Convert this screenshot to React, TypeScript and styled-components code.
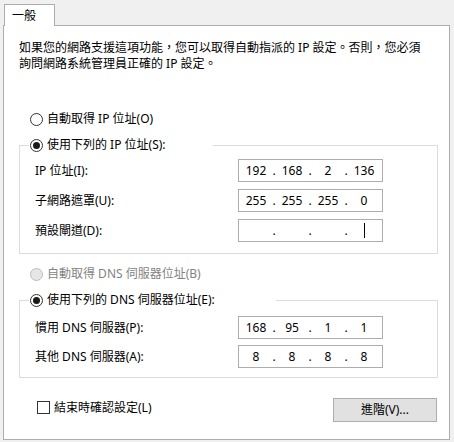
import React from 'react';
import styled, {createGlobalStyle} from 'styled-components';

type Octets = [string, string, string, string];

const GlobalStyle = createGlobalStyle`
  html, body {
    margin: 0;
    padding: 0;
    background: #f0f0f0;
  }
  body {
    font-family: "Noto Sans", "Noto Sans CJK TC", sans-serif;
    font-size: 12px;
    color: #000;
  }
`;

const Radio: React.FC<{checked?: boolean; disabled?: boolean}> = ({checked, disabled}) => (
    <RadioCircle $checked={checked} $disabled={disabled}/>
);

const IpField: React.FC<{value: Octets; caret?: boolean}> = ({value, caret}) => (
    <IpBox>
        {value.map((v, i) => (
            <React.Fragment key={i}>
                {i > 0 && <Dot>.</Dot>}
                <Octet>
                    {v}
                    {caret && i === 3 && <Caret/>}
                </Octet>
            </React.Fragment>
        ))}
    </IpBox>
);

const FieldRow: React.FC<{label: string; value: Octets; caret?: boolean}> = ({label, value, caret}) => (
    <Row>
        <Label>{label}</Label>
        <IpField value={value} caret={caret}/>
    </Row>
);

export default function App() {
    return (
        <>
            <GlobalStyle/>
            <Window>
                <TabStrip>
                    <Tab>一般</Tab>
                </TabStrip>
                <Panel>
                    <Description>
                        如果您的網路支援這項功能，您可以取得自動指派的 IP 設定。否則，您必須<br/>
                        詢問網路系統管理員正確的 IP 設定。
                    </Description>

                    <OptionRow $top={39}>
                        <Radio/>
                        <span>自動取得 IP 位址(O)</span>
                    </OptionRow>
                    <Group>
                        <GroupLegend $width={184}>
                            <Radio checked/>
                            <span>使用下列的 IP 位址(S):</span>
                        </GroupLegend>
                        <Rows $top={6} $bottom={11} $gap={7}>
                            <FieldRow label="IP 位址(I):" value={['192', '168', '2', '136']}/>
                            <FieldRow label="子網路遮罩(U):" value={['255', '255', '255', '0']}/>
                            <FieldRow label="預設閘道(D):" value={['', '', '', '']} caret/>
                        </Rows>
                    </Group>

                    <OptionRow $top={12} $disabled>
                        <Radio disabled/>
                        <span>自動取得 DNS 伺服器位址(B)</span>
                    </OptionRow>
                    <Group>
                        <GroupLegend $width={247}>
                            <Radio checked/>
                            <span>使用下列的 DNS 伺服器位址(E):</span>
                        </GroupLegend>
                        <Rows $top={8} $bottom={9} $gap={6}>
                            <FieldRow label="慣用 DNS 伺服器(P):" value={['168', '95', '1', '1']}/>
                            <FieldRow label="其他 DNS 伺服器(A):" value={['8', '8', '8', '8']}/>
                        </Rows>
                    </Group>

                    <Footer>
                        <CheckRow>
                            <CheckBox/>
                            <span>結束時確認設定(L)</span>
                        </CheckRow>
                        <Button>進階(V)...</Button>
                    </Footer>
                </Panel>
            </Window>
        </>
    );
}

const Window = styled.div`
  width: 454px;
  height: 442px;
  box-sizing: border-box;
  padding: 4px 4px 0 3px;
  background: #f0f0f0;
  overflow: hidden;
`;

const TabStrip = styled.div`
  display: flex;
  height: 21px;
  padding-left: 1px;
`;

const Tab = styled.div`
  position: relative;
  z-index: 1;
  box-sizing: border-box;
  width: 51px;
  height: 22px;
  padding: 3px 0 0 7px;
  line-height: 16px;
  background: #fff;
  border: 1px solid #adadad;
  border-bottom: none;
`;

const Panel = styled.div`
  box-sizing: border-box;
  width: 447px;
  height: 415px;
  padding: 14px 11px 0 15px;
  background: #fff;
  border: 1px solid #adadad;
`;

const Description = styled.div`
  line-height: 16px;
  white-space: nowrap;
`;

const OptionRow = styled.div<{$top: number; $disabled?: boolean}>`
  display: flex;
  align-items: center;
  gap: 4px;
  height: 16px;
  margin-top: ${p => p.$top}px;
  padding-left: 11px;
  line-height: 16px;
  white-space: nowrap;
  color: ${p => (p.$disabled ? '#838383' : '#000')};
`;

const RadioCircle = styled.span<{$checked?: boolean; $disabled?: boolean}>`
  display: inline-flex;
  align-items: center;
  justify-content: center;
  flex: none;
  box-sizing: border-box;
  width: 13px;
  height: 13px;
  border-radius: 50%;
  border: 1px solid ${p => (p.$disabled ? '#bcbcbc' : '#333')};
  background: ${p => (p.$disabled ? '#e6e6e6' : '#fff')};

  &::after {
    content: '';
    display: ${p => (p.$checked ? 'block' : 'none')};
    width: 7px;
    height: 7px;
    border-radius: 50%;
    background: #1a1a1a;
  }
`;

const Group = styled.fieldset`
  margin: 10px 0 0;
  padding: 0 0 0 15px;
  min-width: 0;
  border: 1px solid #dcdcdc;
`;

const GroupLegend = styled.legend<{$width: number}>`
  display: flex;
  align-items: center;
  gap: 4px;
  box-sizing: border-box;
  width: ${p => p.$width}px;
  height: 16px;
  margin-left: -6px;
  padding: 0 0 0 1px;
  line-height: 16px;
  white-space: nowrap;
`;

const Rows = styled.div<{$top: number; $bottom: number; $gap: number}>`
  display: flex;
  flex-direction: column;
  gap: ${p => p.$gap}px;
  padding: ${p => p.$top}px 0 ${p => p.$bottom}px;
`;

const Row = styled.div`
  display: flex;
  align-items: center;
`;

const Label = styled.div`
  width: 203px;
  line-height: 16px;
  white-space: nowrap;
`;

const IpBox = styled.div`
  display: flex;
  align-items: center;
  box-sizing: border-box;
  width: 145px;
  height: 23px;
  padding-left: 3px;
  background: #fff;
  border: 1px solid #adadad;
`;

const Octet = styled.span`
  display: flex;
  align-items: center;
  justify-content: center;
  width: 28px;
  height: 16px;
  line-height: 16px;
`;

const Dot = styled.span`
  width: 8px;
  text-align: center;
  line-height: 16px;
`;

const Caret = styled.span`
  display: block;
  width: 1px;
  height: 15px;
  background: #000;
`;

const Footer = styled.div`
  display: flex;
  align-items: flex-start;
  justify-content: space-between;
  margin-top: 20px;
  padding-left: 18px;
`;

const CheckRow = styled.div`
  display: flex;
  align-items: center;
  gap: 4px;
  margin-top: 3px;
  line-height: 13px;
  white-space: nowrap;
`;

const CheckBox = styled.span`
  display: block;
  box-sizing: border-box;
  width: 13px;
  height: 13px;
  border: 1px solid #333;
  background: #fff;
`;

const Button = styled.button`
  box-sizing: border-box;
  width: 104px;
  height: 24px;
  margin: 0 1px 0 0;
  padding: 0;
  font: inherit;
  color: #000;
  line-height: 16px;
  background: #e1e1e1;
  border: 1px solid #adadad;
`;
